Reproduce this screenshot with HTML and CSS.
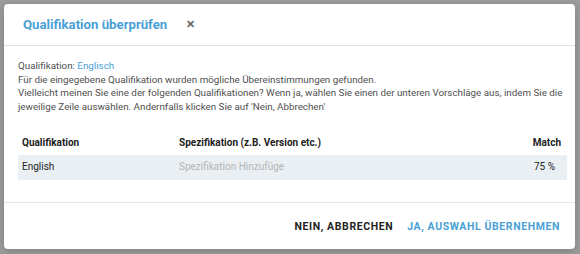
FILE: index.html
```html
<!DOCTYPE html>
<html lang="de">
<head>
    <meta charset="UTF-8">
    <title>Qualifikation überprüfen</title>
    <link rel="stylesheet" href="styles.css">
</head>
<body>
    <div class="modal">
        <div class="modal-header">
            <h2>Qualifikation überprüfen</h2>
            <span class="close">&#x2715;</span>
        </div>
        <div class="modal-body">
            <p>Qualifikation: <span class="hl">Englisch</span></p>
            <p>Für die eingegebene Qualifikation wurden mögliche Übereinstimmungen gefunden.</p>
            <p>Vielleicht meinen Sie eine der folgenden Qualifikationen? Wenn ja, wählen Sie einen der unteren Vorschläge aus, indem Sie die jeweilige Zeile auswählen. Andernfalls klicken Sie auf 'Nein, Abbrechen'</p>

            <table class="matches">
                <thead>
                    <tr>
                        <th>Qualifikation</th>
                        <th>Spezifikation (z.B. Version etc.)</th>
                        <th class="num">Match</th>
                    </tr>
                </thead>
                <tbody>
                    <tr>
                        <td>English</td>
                        <td class="placeholder">Spezifikation Hinzufüge</td>
                        <td class="num">75 %</td>
                    </tr>
                </tbody>
            </table>
        </div>
        <div class="modal-footer">
            <button class="btn">Nein, Abbrechen</button>
            <button class="btn primary">Ja, Auswahl übernehmen</button>
        </div>
    </div>
</body>
</html>
```

FILE: styles.css
```css
* { box-sizing: border-box; margin: 0; padding: 0; }
body {
    font-family: Roboto, 'Liberation Sans', sans-serif;
    background: #9c9c9c;
    padding: 4px 5px 5px 4px;
    height: 254px;
}
.modal {
    background: #fff;
    border-radius: 4px;
    height: 245px;
    display: flex;
    flex-direction: column;
    box-shadow: 0 2px 8px rgba(0,0,0,0.2);
}
.modal-header {
    height: 42px;
    display: flex;
    align-items: center;
    padding: 0 19px;
    border-bottom: 1px solid #e2e2e2;
}
.modal-header h2 {
    font-size: 13.2px;
    font-weight: 700;
    color: #4a9fd6;
}
.close {
    margin-left: 19px;
    font-size: 11px;
    font-weight: 700;
    color: #666;
}
.modal-body {
    flex: 1;
    padding: 13px 8px 0 14px;
    font-size: 9.8px;
    line-height: 13.5px;
    color: #4f4f4f;
}
.hl { color: #4a9fd6; }
.matches {
    width: 100%;
    border-collapse: collapse;
    margin-top: 23px;
    color: #222;
    font-size: 10px;
}
.matches th {
    font-weight: 700;
    text-align: left;
    padding: 0 4px 5px;
}
.matches td {
    background: #e9eff3;
    height: 25px;
    padding: 0 4px;
}
.matches th:first-child { width: 157px; }
.matches .num { text-align: right; padding-right: 6px; }
.matches td.num { padding-right: 12px; }
.matches .placeholder { color: #b5b5b5; }
.modal-footer {
    height: 47px;
    border-top: 1px solid #e6e6e6;
    display: flex;
    justify-content: flex-end;
    align-items: center;
    gap: 14px;
    padding: 0 15px;
}
.btn {
    background: none;
    border: none;
    font-family: inherit;
    font-size: 10.5px;
    font-weight: 700;
    letter-spacing: 0.6px;
    text-transform: uppercase;
    color: #222;
}
.btn.primary { color: #4a9fd6; }
```
